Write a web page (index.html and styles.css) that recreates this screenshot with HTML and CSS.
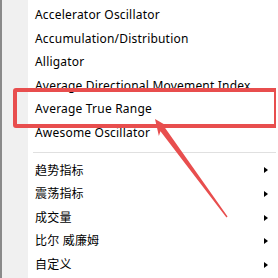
FILE: index.html
```html
<!DOCTYPE html>
<html>
<head>
<meta charset="utf-8">
<link rel="stylesheet" href="styles.css">
</head>
<body>
<div class="menu">
  <div class="item">Accelerator Oscillator</div>
  <div class="item">Accumulation/Distribution</div>
  <div class="item">Alligator</div>
  <div class="item">Average Directional Movement Index</div>
  <div class="item">Average True Range</div>
  <div class="item">Awesome Oscillator</div>
  <div class="sep"></div>
  <div class="item sub">趋势指标</div>
  <div class="item sub">震荡指标</div>
  <div class="item sub">成交量</div>
  <div class="item sub">比尔 威廉姆</div>
  <div class="item sub">自定义</div>
  <div class="highlight"></div>
  <svg class="arrow" width="278" height="278" viewBox="0 0 278 278">
    <polygon points="155,119 170.1,127.8 164.96,127.84 227.56,216.59 226.44,217.41 160.44,131.16 158.9,136" fill="#e84e4e"/>
  </svg>
</div>
</body>
</html>
```
FILE: styles.css
```css
html, body {
  margin: 0;
  padding: 0;
  background: #fff;
}
.menu {
  position: relative;
  width: 276px;
  height: 278px;
  box-sizing: border-box;
  padding-top: 3px;
  border-left: 2px solid #8a8a8a;
  background: linear-gradient(to right, #f0f0f0 26px, #fff 26px);
  font-family: "Noto Sans", "Noto Sans CJK SC", sans-serif;
  font-size: 12px;
  letter-spacing: 0.2px;
  color: #000;
  overflow: hidden;
}
.item {
  height: 23.6px;
  line-height: 23.6px;
  padding-left: 33px;
  position: relative;
  white-space: nowrap;
}
.sub::after {
  content: "";
  position: absolute;
  right: 8px;
  top: 50%;
  margin-top: -3px;
  border-left: 4px solid #000;
  border-top: 3px solid transparent;
  border-bottom: 3px solid transparent;
}
.sep {
  height: 14px;
  margin-left: 31px;
  background: linear-gradient(#fff 7px, #e0e0e0 7px, #e0e0e0 8px, #fff 8px);
}
.highlight {
  position: absolute;
  left: 11px;
  top: 88px;
  width: 265px;
  height: 40px;
  box-sizing: border-box;
  border: 4px solid #e84e4e;
  border-radius: 3px;
}
.arrow {
  position: absolute;
  left: -2px;
  top: 0;
}
```
